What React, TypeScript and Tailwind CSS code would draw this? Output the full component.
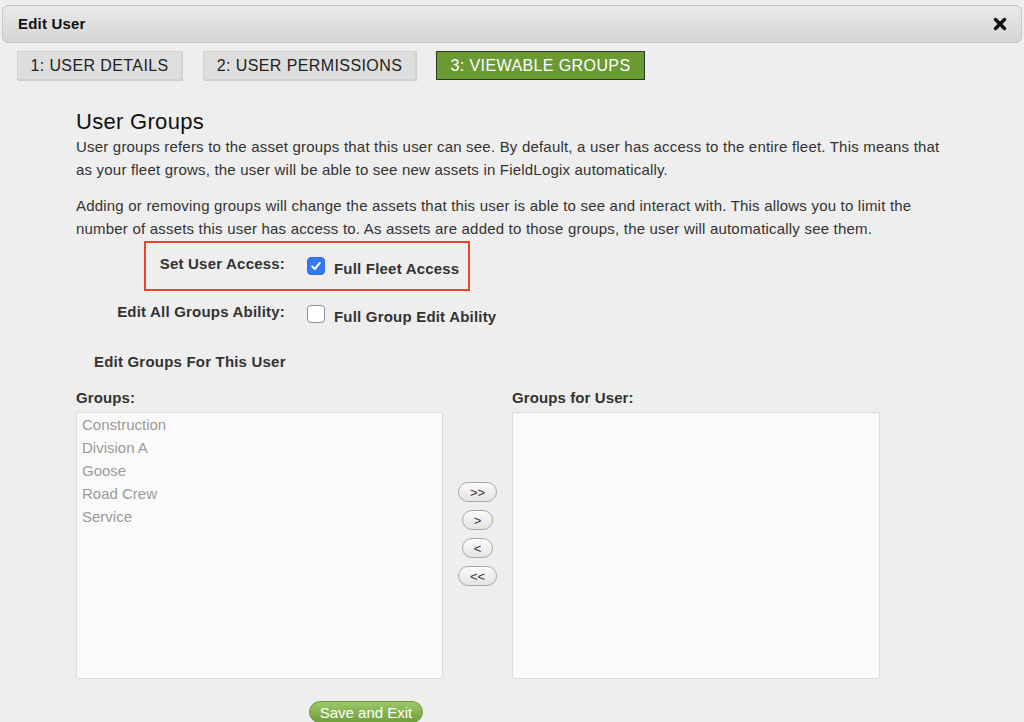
import React, { useState } from 'react';

const groups = ['Construction', 'Division A', 'Goose', 'Road Crew', 'Service'];

const Checkbox: React.FC<{ checked: boolean; onToggle: () => void }> = ({ checked, onToggle }) => (
  <button
    type="button"
    onClick={onToggle}
    className={
      checked
        ? 'w-[18px] h-[18px] rounded-[4px] bg-[#3478f6] border border-[#2f6fe0] flex items-center justify-center shrink-0'
        : 'w-[18px] h-[18px] rounded-[4px] bg-white border border-[#8e8e8e] flex items-center justify-center shrink-0'
    }
  >
    {checked && (
      <svg width="12" height="12" viewBox="0 0 12 12">
        <path d="M2.2 6.4 L4.8 9 L9.8 2.8" fill="none" stroke="white" strokeWidth="2" strokeLinecap="round" strokeLinejoin="round" />
      </svg>
    )}
  </button>
);

const ArrowButton: React.FC<{ label: string; wide?: boolean }> = ({ label, wide }) => (
  <button
    type="button"
    className={
      (wide ? 'w-[39px]' : 'w-[31px]') +
      ' h-[20px] rounded-full border border-[#a9a9a9] bg-gradient-to-b from-[#fbfbfb] to-[#e4e4e4] text-[13px] leading-none text-[#333] flex items-center justify-center'
    }
  >
    {label}
  </button>
);

export default function App() {
  const [fullFleet, setFullFleet] = useState(true);
  const [fullEdit, setFullEdit] = useState(false);

  return (
    <div className="w-[1024px] h-[722px] overflow-hidden bg-[#eeeeee] font-['Liberation_Sans',Arial,sans-serif] text-[#333]">
      {/* Title bar */}
      <div className="pt-[5px] px-[2px]">
        <div className="h-[38px] rounded-[6px] border border-[#c6c6c6] bg-gradient-to-b from-[#e9e9e9] to-[#d5d5d5] flex items-center justify-between pl-[15px] pr-[14px]">
          <span className="text-[15px] tracking-[0.2px] font-bold text-[#111]">Edit User</span>
          <svg width="14" height="14" viewBox="0 0 14 14">
            <path d="M2.5 2.5 L11.5 11.5 M11.5 2.5 L2.5 11.5" stroke="#111" strokeWidth="3.4" strokeLinecap="round" />
          </svg>
        </div>
      </div>

      {/* Tabs */}
      <div className="flex mt-[8px] pl-[17px]">
        <div className="w-[165px] h-[29px] bg-[#dedede] border border-[#d2d2d2] shadow-[1px_1px_0_#cfcfcf] flex items-center justify-center text-[16px] tracking-[0.4px] text-[#222]">
          1: USER DETAILS
        </div>
        <div className="w-[213px] h-[29px] ml-[21px] bg-[#dedede] border border-[#d2d2d2] shadow-[1px_1px_0_#cfcfcf] flex items-center justify-center text-[16px] tracking-[0.4px] text-[#222]">
          2: USER PERMISSIONS
        </div>
        <div className="w-[209px] h-[29px] ml-[20px] bg-[#6a9a34] border border-[#2f3a26] flex items-center justify-center text-[16px] tracking-[0.4px] text-white">
          3: VIEWABLE GROUPS
        </div>
      </div>

      {/* Content */}
      <div className="pl-[76px] relative">
        <h2 className="mt-[29px] text-[22px] tracking-[0.3px] leading-[26px] text-[#111]">User Groups</h2>
        <p className="w-[870px] text-[15px] tracking-[0.2px] leading-[23px]">
          User groups refers to the asset groups that this user can see. By default, a user has access to the entire fleet. This means that as your fleet grows, the user will be able to see new assets in FieldLogix automatically.
        </p>
        <p className="w-[870px] mt-[13px] text-[15px] tracking-[0.2px] leading-[23px]">
          Adding or removing groups will change the assets that this user is able to see and interact with. This allows you to limit the number of assets this user has access to. As assets are added to those groups, the user will automatically see them.
        </p>

        <div className="relative mt-[1px]">
          {/* highlight annotation */}
          <div className="absolute left-[68px] top-0 w-[326px] h-[50px] border-2 border-[#e8452c] pointer-events-none"></div>

          <div className="flex items-center h-[50px]">
            <span className="w-[209px] text-right text-[15px] tracking-[0.2px] font-bold mb-[4px]">Set User Access:</span>
            <span className="ml-[22px]">
              <Checkbox checked={fullFleet} onToggle={() => setFullFleet(!fullFleet)} />
            </span>
            <span className="ml-[9px] text-[15px] tracking-[0.2px] font-bold mt-[6px]">Full Fleet Access</span>
          </div>
          <div className="flex items-center h-[46px]">
            <span className="w-[209px] text-right text-[15px] tracking-[0.2px] font-bold mb-[4px]">Edit All Groups Ability:</span>
            <span className="ml-[22px]">
              <Checkbox checked={fullEdit} onToggle={() => setFullEdit(!fullEdit)} />
            </span>
            <span className="ml-[9px] text-[15px] tracking-[0.2px] font-bold mt-[6px]">Full Group Edit Ability</span>
          </div>
        </div>

        <div className="mt-[15px] ml-[18px] text-[15px] tracking-[0.2px] leading-[20px] font-bold">Edit Groups For This User</div>

        <div className="flex mt-[16px]">
          <div className="w-[367px]">
            <div className="text-[15px] tracking-[0.1px] leading-[20px] font-bold">Groups:</div>
            <div className="mt-[4px] h-[267px] bg-[#fafafa] border border-[#dcdcdc] rounded-[2px] pl-[5px]">
              {groups.map((g) => (
                <div key={g} className="text-[15px] leading-[23px] text-[#9a9a9a]">{g}</div>
              ))}
            </div>
          </div>
          <div className="w-[69px] pt-[94px] flex flex-col items-center gap-[8px]">
            <ArrowButton label=">>" wide />
            <ArrowButton label=">" />
            <ArrowButton label="<" />
            <ArrowButton label="<<" wide />
          </div>
          <div className="w-[368px]">
            <div className="text-[15px] tracking-[0.1px] leading-[20px] font-bold">Groups for User:</div>
            <div className="mt-[4px] h-[267px] bg-[#fafafa] border border-[#dcdcdc] rounded-[2px]"></div>
          </div>
        </div>

        <button
          type="button"
          className="mt-[22px] ml-[233px] w-[114px] h-[22px] rounded-full border border-[#6b9a3c] bg-gradient-to-b from-[#9cc86a] to-[#6f9f3a] text-white text-[15px] leading-none flex items-center justify-center"
        >
          Save and Exit
        </button>
      </div>
    </div>
  );
}
